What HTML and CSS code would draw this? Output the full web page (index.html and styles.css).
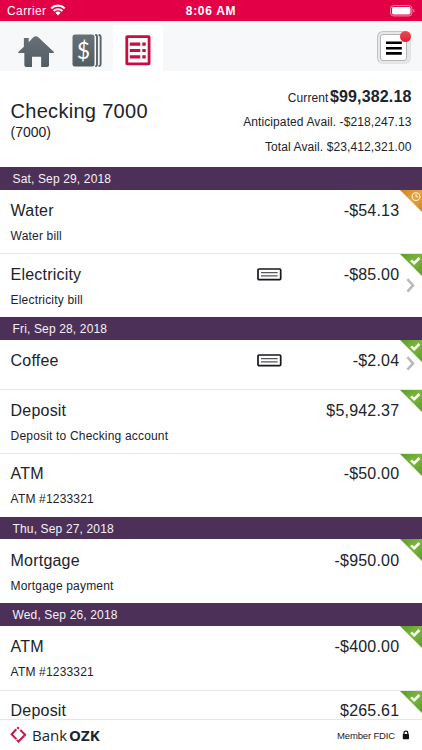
FILE: index.html
```html
<!DOCTYPE html>
<html lang="en">
<head>
  <meta charset="UTF-8">
  <meta name="viewport" content="width=device-width, initial-scale=1.0">
  <title>Checking 7000</title>
  <link rel="stylesheet" href="styles.css">
</head>
<body>
  <div class="status-bar">
    <div class="carrier">
      <span>Carrier</span>
      <svg class="wifi" viewBox="0 0 16 12">
        <path d="M1.2 4.4a9.7 9.7 0 0 1 13.6 0M3.6 7a6.3 6.3 0 0 1 8.8 0" fill="none" stroke="#fff" stroke-width="2.1"/>
        <path d="M5.4 8.8a3.8 3.8 0 0 1 5.2 0L8 11.5z" fill="#fff"/>
      </svg>
    </div>
    <div class="clock">8:06 AM</div>
    <svg class="battery" viewBox="0 0 25 12">
      <rect x=".6" y=".6" width="21.3" height="10.3" rx="2.8" fill="none" stroke="#f78faf"/>
      <rect x="2" y="2" width="18.5" height="7.5" rx="1.4" fill="#fff"/>
      <path d="M23.3 4v3.6q1.2-.7 1.2-1.8T23.3 4" fill="#f78faf"/>
    </svg>
  </div>

  <div class="nav">
    <div class="tab tab-home">
      <svg width="38" height="33" viewBox="0 0 38 34">
        <path d="M6.5 3.2h5v4.2L16.5 2q2.3-1.5 4.6 0L37.5 17.5q.4 1-.8 1h-4.3v12.7q0 1.8-1.8 1.8h-6.3V22.5h-9.4V33H9q-2 0-2-1.8V18.5H1.3q-1 0-.6-1l5.8-5.5z" fill="url(#slate)"/>
      </svg>
    </div>
    <div class="tab tab-accounts">
      <svg width="30" height="33" viewBox="0 0 30 33">
        <rect x=".5" y=".5" width="22" height="32" rx="2.5" fill="url(#slate)"/>
        <path d="M23.2.6q1.8.4 1.8 2v27.8q0 1.6-1.8 2M26.6.8q2 .4 2 2v27.4q0 1.6-2 2" fill="none" stroke="#596167" stroke-width="1.9"/>
        <text x="11.5" y="24.5" class="dollar">$</text>
      </svg>
    </div>
    <div class="tab active">
      <svg width="26" height="31" viewBox="0 0 26 31">
        <rect x="1.8" y="1.6" width="22.3" height="27.3" rx=".3" fill="#fff" stroke="#c80d43" stroke-width="2.8"/>
        <path d="M4.8 9.2h10.5M4.8 15.5h10.5M4.8 21.8h10.5M17.3 9.2h3.4M17.3 15.5h3.4M17.3 21.8h3.4" stroke="#c80d43" stroke-width="3.2"/>
      </svg>
    </div>
    <button class="menu" aria-label="Menu">
      <span class="menu-face">
        <svg width="18" height="14" viewBox="0 0 18 14">
          <path d="M1 1.8h15.8M1 7.2h15.8M1 12.4h15.8" stroke="#000" stroke-width="2.6"/>
        </svg>
      </span>
      <span class="badge"></span>
    </button>
  </div>

  <div class="account">
    <div>
      <h1>Checking 7000</h1>
      <div class="number">(7000)</div>
    </div>
    <div class="balances">
      <div>Current <b>$99,382.18</b></div>
      <div>Anticipated Avail. -$218,247.13</div>
      <div>Total Avail. $23,412,321.00</div>
    </div>
  </div>

  <div class="transactions" id="transactions"></div>

  <div class="footer">
    <svg class="logo" width="17" height="18" viewBox="0 0 17 18">
      <path d="M6.3 3.3L1.6 8.2l4.8 4.9M7.3 1.2l1.6 1.6M10.2 3.9l4.9 4.8-6.6 6.8-1.6-1.6" fill="none" stroke="#c9154a" stroke-width="2"/>
    </svg>
    <span class="brand">Bank<b>OZK</b></span>
    <span class="fdic">Member FDIC</span>
    <svg class="lock" width="8" height="10" viewBox="0 0 8 10">
      <rect x=".8" y="4" width="6.2" height="5.2" rx=".6" fill="#111"/>
      <path d="M2 4.5V3a1.9 1.9 0 0 1 3.8 0v1.5" fill="none" stroke="#111" stroke-width="1.2"/>
    </svg>
  </div>

  <svg class="defs">
    <defs>
      <linearGradient id="slate" x1="0" y1="0" x2="0" y2="1">
        <stop offset="0" stop-color="#687177"/>
        <stop offset="1" stop-color="#525c63"/>
      </linearGradient>
      <linearGradient id="orange" x1="0" y1="0" x2="1" y2="1">
        <stop offset="0" stop-color="#c98528"/>
        <stop offset=".5" stop-color="#e8a23c"/>
        <stop offset="1" stop-color="#cf8626"/>
      </linearGradient>
      <linearGradient id="green" x1="0" y1="0" x2="1" y2="1">
        <stop offset="0" stop-color="#5c9a28"/>
        <stop offset=".5" stop-color="#7bb73e"/>
        <stop offset="1" stop-color="#5c9a28"/>
      </linearGradient>
    </defs>
    <symbol id="pending" viewBox="0 0 22 22">
      <path d="M0 0h22v22z" fill="url(#orange)"/>
      <circle cx="16" cy="6.6" r="3.9" fill="none" stroke="#fff3df" stroke-width="1.1"/>
      <path d="M16 4v2.8h2.2" fill="none" stroke="#fff3df"/>
    </symbol>
    <symbol id="cleared" viewBox="0 0 22 22">
      <path d="M0 0h22v22z" fill="url(#green)"/>
      <path d="M11.1 6.3l3.1 3 5.2-5.3" fill="none" stroke="#fff" stroke-width="2.5"/>
    </symbol>
    <symbol id="check" viewBox="0 0 25 13">
      <rect x="1" y="1" width="22.7" height="10.6" rx="1" fill="#fff" stroke="#17171c" stroke-width="1.7"/>
      <path d="M4 4.6h16.6M4 7.9h16.6" stroke="#55555b" stroke-width="1.1"/>
    </symbol>
    <symbol id="chevron" viewBox="0 0 9 15">
      <path d="M1.4 1.2l5.6 6.2-5.6 6.2" fill="none" stroke="#b9b9b9" stroke-width="2.5"/>
    </symbol>
  </svg>

  <script>
    const days = [
      { date: 'Sat, Sep 29, 2018', items: [
        { name: 'Water', memo: 'Water bill', amount: '-$54.13', status: 'pending' },
        { name: 'Electricity', memo: 'Electricity bill', amount: '-$85.00', status: 'cleared', image: true }
      ] },
      { date: 'Fri, Sep 28, 2018', items: [
        { name: 'Coffee', amount: '-$2.04', status: 'cleared', image: true },
        { name: 'Deposit', memo: 'Deposit to Checking account', amount: '$5,942.37', status: 'cleared' },
        { name: 'ATM', memo: 'ATM #1233321', amount: '-$50.00', status: 'cleared' }
      ] },
      { date: 'Thu, Sep 27, 2018', items: [
        { name: 'Mortgage', memo: 'Mortgage payment', amount: '-$950.00', status: 'cleared' }
      ] },
      { date: 'Wed, Sep 26, 2018', items: [
        { name: 'ATM', memo: 'ATM #1233321', amount: '-$400.00', status: 'cleared' },
        { name: 'Deposit', amount: '$265.61', status: 'cleared' }
      ] }
    ];

    const icon = (name, cls) => `<svg class="${cls}"><use href="#${name}"/></svg>`;

    function row(item) {
      return `
        <div class="row ${item.memo ? '' : 'short'}">
          <div class="line">
            <span class="name">${item.name}</span>
            ${item.image ? icon('check', 'check') : ''}
            <span class="amount">${item.amount}</span>
          </div>
          ${item.memo ? `<div class="memo">${item.memo}</div>` : ''}
          ${icon(item.status, 'corner')}
          ${item.image ? icon('chevron', 'chevron') : ''}
        </div>
      `;
    }

    document.getElementById('transactions').innerHTML = days.map(day => `
      <div class="date">${day.date}</div>
      ${day.items.map(row).join('')}
    `).join('');
  </script>
</body>
</html>
```

FILE: styles.css
```css
* {
  box-sizing: border-box;
  margin: 0;
  padding: 0;
}

body {
  font-family: "Liberation Sans", Arial, sans-serif;
  font-size: 12px;
  letter-spacing: 0.2px;
  color: #20232b;
  background: #fff;
  height: 100vh;
  display: flex;
  flex-direction: column;
  overflow: hidden;
}

svg {
  display: block;
  flex: none;
}

.defs {
  position: absolute;
  width: 0;
  height: 0;
}

.status-bar {
  height: 21px;
  flex: none;
  display: grid;
  grid-template-columns: 1fr auto 1fr;
  align-items: center;
  padding: 0 7px 0 7px;
  background: #e40046;
  color: #fff;
}

.carrier {
  display: flex;
  align-items: center;
  gap: 4px;
  letter-spacing: 0.4px;
}

.wifi {
  width: 16px;
  height: 12px;
  margin-top: -2px;
}

.clock {
  font-weight: bold;
  letter-spacing: 0.7px;
}

.battery {
  width: 25px;
  height: 12px;
  justify-self: end;
}

.nav {
  height: 50px;
  flex: none;
  display: flex;
  align-items: flex-end;
  background: #f7f8fa;
}

.tab {
  height: 46px;
  display: flex;
  align-items: flex-start;
}

.tab-home {
  width: 72px;
  padding: 10px 0 0 17px;
}

.tab-accounts {
  width: 41px;
  padding-top: 9px;
}

.tab.active {
  width: 50px;
  justify-content: center;
  padding-top: 10px;
  padding-right: 1px;
  background: #fff;
  border-radius: 3px 3px 0 0;
}

.dollar {
  font-family: Lato, sans-serif;
  font-size: 23px;
  letter-spacing: 0;
  fill: #fff;
  text-anchor: middle;
}

.menu {
  position: relative;
  width: 34px;
  height: 33px;
  margin: 0 11px 7px auto;
  padding: 2px;
  border: 1px solid #c2c3c5;
  border-right-color: #e2e2e2;
  border-bottom-color: #e2e2e2;
  border-radius: 6px;
  background: #e6e7e8;
}

.menu-face {
  height: 27px;
  width: 27px;
  display: flex;
  align-items: center;
  justify-content: center;
  background: #fff;
  border: 1px solid #b5b5b5;
  border-radius: 3px;
}

.badge {
  position: absolute;
  top: -1px;
  right: -1px;
  width: 11px;
  height: 11px;
  border-radius: 50%;
  background: linear-gradient(#ef4a51, #dc1f34);
}

.account {
  height: 96px;
  flex: none;
  display: flex;
  justify-content: space-between;
  padding: 0 10.5px 0 10.5px;
}

h1 {
  margin-top: 28px;
  font-size: 20px;
  font-weight: normal;
  line-height: 24px;
  letter-spacing: 0.3px;
}

.number {
  font-size: 14px;
  line-height: 19px;
  letter-spacing: 0;
}

.balances {
  padding-top: 13.5px;
  text-align: right;
  line-height: 24.8px;
  letter-spacing: 0.1px;
}

.balances b {
  margin-left: -2px;
  font-size: 16px;
  letter-spacing: 0.15px;
}

.transactions {
  flex: 1;
  min-height: 0;
  overflow: hidden;
}

.date {
  height: 22.8px;
  padding-left: 12.5px;
  line-height: 24px;
  letter-spacing: 0.15px;
  color: #f6f1f8;
  background: #4d3057;
}

.row {
  position: relative;
  height: 63.7px;
  padding: 11px 22.7px 0 10.6px;
}

.row.short {
  height: 49.2px;
}

.row + .row {
  padding-top: 10px;
  border-top: 1px solid #e7e7ea;
}

.line {
  display: flex;
  align-items: center;
  height: 21px;
  font-size: 16px;
}

.name {
  width: 246px;
}

.check {
  width: 25px;
  height: 13px;
  margin-top: -1px;
}

.amount {
  margin-left: auto;
  letter-spacing: 0.2px;
}

.memo {
  margin-top: 6.5px;
  line-height: 16px;
  letter-spacing: 0.18px;
}

.corner {
  position: absolute;
  top: 0;
  right: 0;
  width: 22px;
  height: 22px;
}

.chevron {
  position: absolute;
  top: 24px;
  right: 7px;
  width: 9px;
  height: 15px;
}

.short .chevron {
  top: 16.5px;
}

.footer {
  height: 31px;
  flex: none;
  display: flex;
  align-items: center;
  padding: 0 12px 0 10px;
  border-top: 1px solid #e4e4e6;
  background: #fff;
}

.brand {
  margin-left: 5px;
  font-family: "Open Sans", sans-serif;
  font-size: 15px;
  line-height: 18px;
  letter-spacing: 0;
}

.brand b {
  margin-left: 2px;
}

.fdic {
  margin-left: auto;
  font-size: 9.5px;
  letter-spacing: -0.15px;
}

.lock {
  margin-left: 7px;
}
```
